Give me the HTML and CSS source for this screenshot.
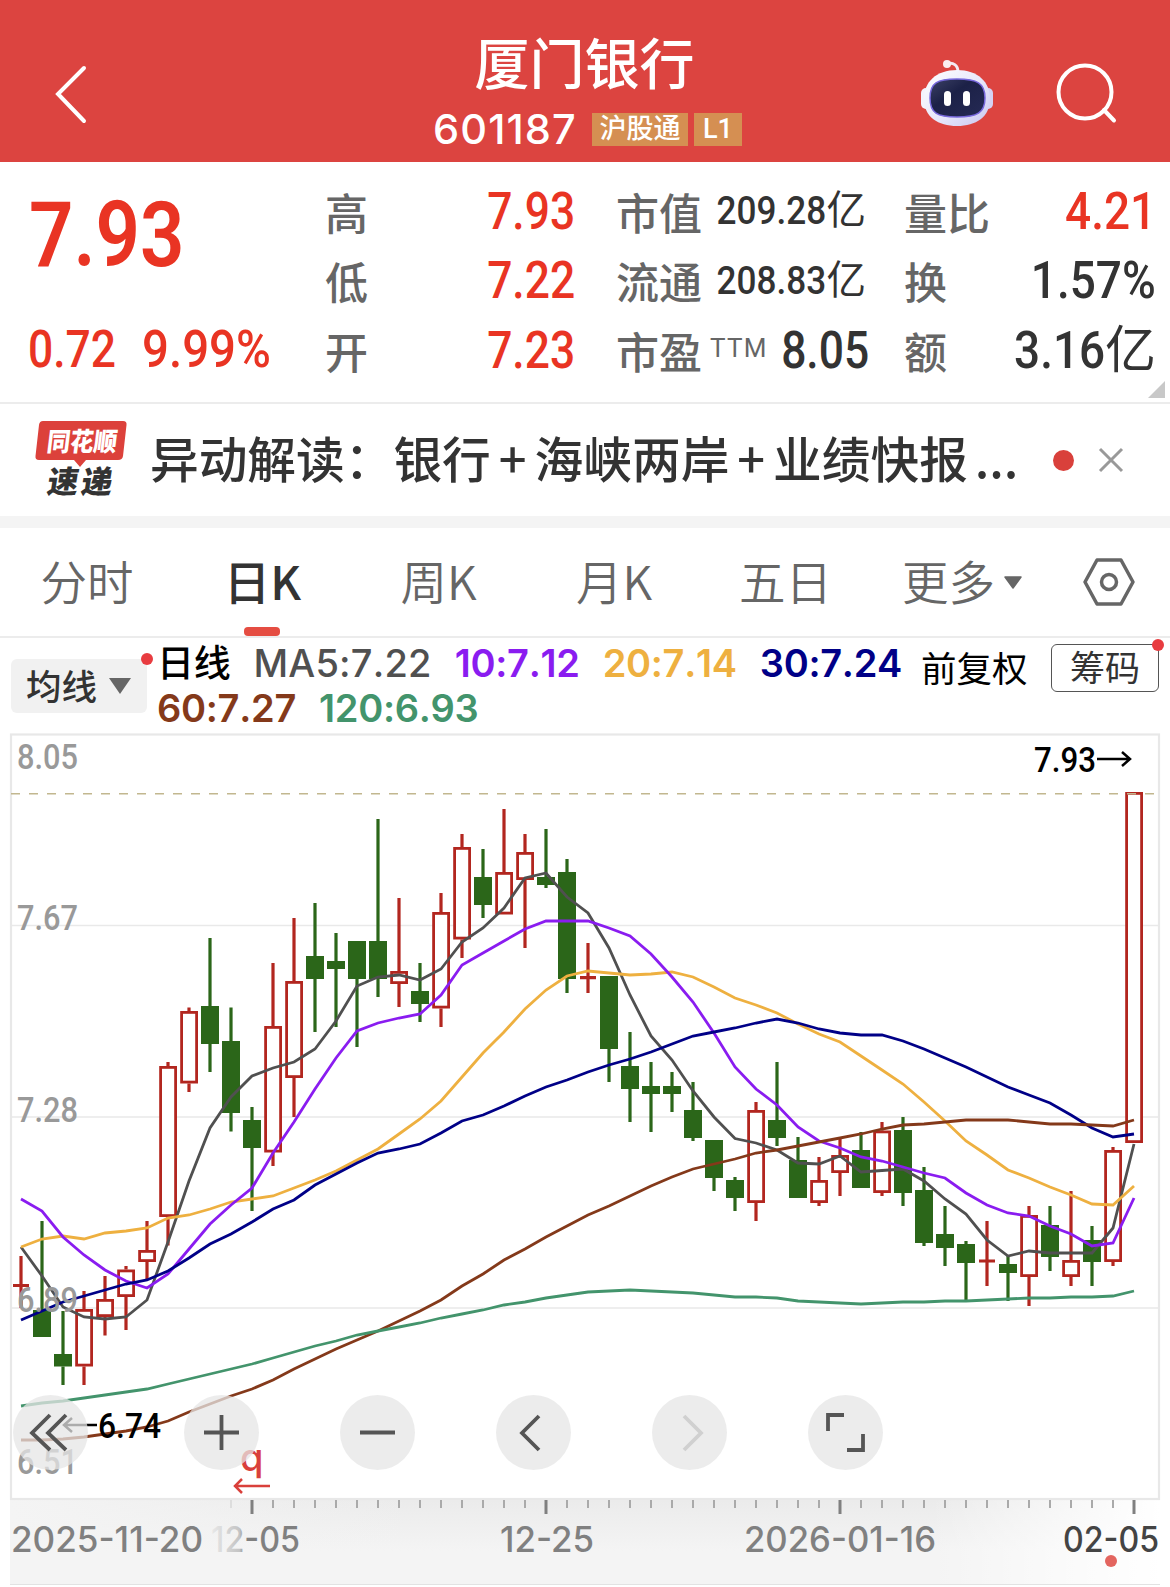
FILE: index.html
```html
<!DOCTYPE html>
<html lang="zh-CN">
<head>
    <meta charset="UTF-8">
    <meta name="viewport" content="width=device-width, initial-scale=1.0">
    <title>厦门银行 601187</title>
    <link rel="stylesheet" href="styles.css">
</head>
<body>
    <header class="header">
        <svg class="back" width="36" height="62" viewBox="0 0 36 62"><path d="M31 5 L5 31 L31 58"/></svg>
        <div class="title">
            <h1>厦门银行</h1>
            <div class="code-row">
                <span class="code">601187</span>
                <span class="tag">沪股通</span>
                <span class="tag tag-l1">L1</span>
            </div>
        </div>
        <div class="header-icons">
            <svg width="74" height="70" viewBox="920 58 74 70">
                <defs>
                    <linearGradient id="shell" x1="0" y1="0" x2="1" y2="1">
                        <stop offset="0" stop-color="#fff"/>
                        <stop offset=".6" stop-color="#e4e4fa"/>
                        <stop offset="1" stop-color="#c9c6ef"/>
                    </linearGradient>
                    <linearGradient id="visor" x1="0" y1="0" x2="1" y2="1">
                        <stop offset="0" stop-color="#3c4166"/>
                        <stop offset=".4" stop-color="#1c2147"/>
                        <stop offset="1" stop-color="#252a55"/>
                    </linearGradient>
                </defs>
                <path d="M947 64 C953 62 958 65 958 72" fill="none" stroke="#f3eaf4" stroke-width="3"/>
                <circle cx="947" cy="64" r="4" fill="#fbeef0"/>
                <rect x="921" y="88" width="11" height="21" rx="5" fill="#f4f2fc"/>
                <rect x="982" y="88" width="11" height="21" rx="5" fill="#d5d2f3"/>
                <path d="M957 70 C978 70 990 82 990 99 C990 117 976 126 957 126 C938 126 924 117 924 99 C924 82 936 70 957 70 Z" fill="url(#shell)"/>
                <path d="M957 79 C977 79 985 83 985 98 C985 113 977 117 957 117 C937 117 930 113 930 98 C930 83 937 79 957 79 Z" fill="url(#visor)" stroke="#7768dc" stroke-width="1.5"/>
                <rect x="944" y="91" width="7" height="15" rx="3.5" fill="#fff"/>
                <rect x="963" y="91" width="7" height="15" rx="3.5" fill="#fff"/>
            </svg>
            <svg class="search" width="64" height="64" viewBox="1054 62 64 64">
                <circle cx="1085" cy="93" r="26.5"/>
                <path d="M1104 111 L1114 121.5"/>
            </svg>
        </div>
    </header>

    <section class="quote">
        <div class="price-box">
            <div class="price num">7.93</div>
            <div class="change"><span class="num">0.72</span><span class="num">9.99%</span></div>
        </div>
        <dl class="stats">
            <div><dt>高</dt><dd class="red"><span class="num">7.93</span></dd></div>
            <div><dt>市值</dt><dd class="small"><span class="num">209.28</span>亿</dd></div>
            <div><dt>量比</dt><dd class="red"><span class="num">4.21</span></dd></div>
            <div><dt>低</dt><dd class="red"><span class="num">7.22</span></dd></div>
            <div><dt>流通</dt><dd class="small"><span class="num">208.83</span>亿</dd></div>
            <div><dt>换</dt><dd><span class="num">1.57%</span></dd></div>
            <div><dt>开</dt><dd class="red"><span class="num">7.23</span></dd></div>
            <div><dt>市盈<sup>TTM</sup></dt><dd class="pe"><span class="num">8.05</span></dd></div>
            <div><dt>额</dt><dd><span class="num">3.16</span>亿</dd></div>
        </dl>
        <i class="corner"></i>
    </section>

    <section class="news">
        <svg class="news-logo" width="94" height="80" viewBox="34 420 94 80">
            <path d="M43 421 H123 Q127 421 126.500 425 L123 456 Q122.500 460 118 460 H86 L80 467 L74 460 H39 Q35 460 35.500 456 L39 425 Q39.500 421 43 421 Z" fill="#dc413b"/>
            <text class="logo-top" transform="translate(46 451) skewX(-7)" textLength="70" lengthAdjust="spacingAndGlyphs">同花顺</text>
            <text class="logo-bottom" transform="translate(46 493) skewX(-9)" textLength="65">速递</text>
        </svg>
        <p>异动解读：银行<b>+</b>海峡两岸<b>+</b>业绩快报<span class="dots">...</span></p>
        <i class="dot-big"></i>
        <svg class="close" width="26" height="26" viewBox="0 0 26 26"><path d="M2 2 L24 24 M24 2 L2 24"/></svg>
    </section>

    <nav class="tabs">
        <span>分时</span>
        <span class="active">日K</span>
        <span>周K</span>
        <span>月K</span>
        <span>五日</span>
        <span>更多<svg width="18" height="13" viewBox="0 0 18 13"><path d="M1 1 H17 L9 12 Z" fill="#666" stroke="#666" stroke-width="1.500" stroke-linejoin="round"/></svg></span>
        <span><svg class="gear" width="54" height="50" viewBox="0 0 54 50"><path d="M15 3 H39 L51 25 L39 47 H15 L3 25 Z"/><circle cx="27" cy="25" r="7.500"/></svg></span>
    </nav>

    <section class="legend">
        <div class="ma-button">均线<i class="caret"></i><i class="dot"></i></div>
        <div class="ma-list">
            <span class="ma-title">日线</span>
            <span class="ma5">MA5:7.22</span>
            <span class="ma10">10:7.12</span>
            <span class="ma20">20:7.14</span>
            <span class="ma30">30:7.24</span>
            <span class="ma60">60:7.27</span>
            <span class="ma120">120:6.93</span>
        </div>
        <span class="adjust">前复权</span>
        <span class="chips">筹码<i class="dot"></i></span>
    </section>

    <section class="chart">
        <svg id="kline" width="1170" height="860" viewBox="0 727 1170 860">
            <defs>
                <linearGradient id="axisBg" x1="0" y1="0" x2="0" y2="1">
                    <stop offset="0" stop-color="#ebebeb"/>
                    <stop offset=".6" stop-color="#f4f4f4"/>
                </linearGradient>
                <linearGradient id="axisFade">
                    <stop offset="0" stop-color="#f4f4f4"/>
                    <stop offset=".35" stop-color="#f4f4f4" stop-opacity="0"/>
                    <stop offset=".8" stop-color="#fff" stop-opacity="0"/>
                    <stop offset="1" stop-color="#fff"/>
                </linearGradient>
                <linearGradient id="dateFade" gradientUnits="userSpaceOnUse" x1="213" y1="0" x2="246" y2="0">
                    <stop offset="0" stop-color="#e6e6e6"/>
                    <stop offset=".8" stop-color="#c4c4c4"/>
                    <stop offset="1" stop-color="#808080"/>
                </linearGradient>
            </defs>
            <rect x="10" y="1500" width="1150" height="85" fill="url(#axisBg)"/>
            <rect x="10" y="1500" width="1150" height="85" fill="url(#axisFade)"/>
            <path d="M10 1584.500 H1160" stroke="#e2e2e2"/>
            <path class="grid" d="M11 925.500 H1159 M11 1117 H1159 M11 1308 H1159"/>
            <rect class="frame" x="11" y="734.500" width="1148" height="764.500"/>
            <g id="ticks"></g>
            <g id="candles"></g>
            <path class="last-price" d="M11 793.700 H1159"/>
            <g id="averages"></g>
            <g class="axis-y">
                <text x="17" y="769" textLength="61" lengthAdjust="spacingAndGlyphs">8.05</text>
                <text x="17" y="930" textLength="61" lengthAdjust="spacingAndGlyphs">7.67</text>
                <text x="17" y="1122" textLength="61" lengthAdjust="spacingAndGlyphs">7.28</text>
                <text x="17" y="1312" textLength="61" lengthAdjust="spacingAndGlyphs">6.89</text>
                <text x="17" y="1474" textLength="61" lengthAdjust="spacingAndGlyphs">6.51</text>
            </g>
            <g class="peak">
                <text x="1034" y="772" textLength="62" lengthAdjust="spacingAndGlyphs">7.93</text>
                <path d="M1097 759 H1130 M1122 752 L1130 759 L1122 766"/>
                <text x="98" y="1437.500" textLength="63" lengthAdjust="spacingAndGlyphs">6.74</text>
                <path d="M97 1425 H64 M72 1418 L64 1425 L72 1432"/>
            </g>
            <g class="dividend">
                <text x="240" y="1471">q</text>
                <path d="M270 1486 H236 M242 1479 L235 1486 L242 1493"/>
            </g>
            <g class="axis-x">
                <text x="11" y="1552" textLength="192" lengthAdjust="spacingAndGlyphs">2025-11-20</text>
                <text x="211" y="1552" textLength="89" lengthAdjust="spacingAndGlyphs" fill="url(#dateFade)">12-05</text>
                <text x="500" y="1552" textLength="94" lengthAdjust="spacingAndGlyphs">12-25</text>
                <text x="744" y="1552" textLength="192" lengthAdjust="spacingAndGlyphs">2026-01-16</text>
                <text class="today" x="1063" y="1552" textLength="96" lengthAdjust="spacingAndGlyphs">02-05</text>
            </g>
            <circle cx="1111" cy="1561" r="6" fill="#e3655f"/>
        </svg>
        <div class="tools">
            <button><svg viewBox="0 0 75 75"><path d="M37 20 L19 38 L37 55 M53 20 L35 38 L53 55"/></svg></button>
            <button><svg viewBox="0 0 75 75"><path d="M20 37.500 H55 M37.500 20 V55"/></svg></button>
            <button><svg viewBox="0 0 75 75"><path d="M20 37.500 H55"/></svg></button>
            <button><svg viewBox="0 0 75 75"><path d="M43 21 L26 38 L43 55"/></svg></button>
            <button class="disabled"><svg viewBox="0 0 75 75"><path d="M32 21 L49 38 L32 55"/></svg></button>
            <button><svg viewBox="0 0 75 75"><path d="M36 20 H20 V36 M39 55 H55 V39"/></svg></button>
        </div>
    </section>

    <script src="chart.js"></script>
</body>
</html>
```

FILE: styles.css
```css
* {
    box-sizing: border-box;
}

body {
    margin: 0;
    width: 1170px;
    height: 1587px;
    overflow: hidden;
    background: #fff;
    color: #333;
    font-family: Inter, "Noto Sans CJK SC", sans-serif;
}

i {
    display: block;
}

/* condensed digits */
.num {
    display: inline-block;
    font-family: Roboto, sans-serif;
    font-weight: 500;
    transform: scaleX(0.87);
    transform-origin: right center;
}

.header {
    display: grid;
    grid-template-columns: 1fr 400px 1fr;
    align-items: center;
    height: 162px;
    background: #dc4440;
    color: #fff;
}

.back {
    margin: 26px 0 0 53px;
    fill: none;
    stroke: #fff;
    stroke-width: 4;
    stroke-linecap: round;
}

.title {
    text-align: center;
}

.title h1 {
    margin: 16px 0 0 -1px;
    font-family: "Noto Sans CJK SC", sans-serif;
    font-size: 55px;
    font-weight: 500;
    line-height: 76px;
}

.code-row {
    display: flex;
    justify-content: center;
    align-items: center;
    height: 56px;
    margin: 2px 0 0 5px;
    padding-top: 2px;
}

.code {
    margin-right: 15px;
    font-size: 41.5px;
    font-weight: 550;
    letter-spacing: 1.1px;
}

.tag {
    width: 96px;
    height: 33px;
    margin-right: 6px;
    background: #d58f52;
    font-size: 27px;
    font-weight: 500;
    line-height: 32px;
}

.tag-l1 {
    width: 48px;
    margin-right: 0;
    font-family: Roboto, sans-serif;
}

.header-icons {
    display: flex;
    align-items: center;
    justify-content: flex-end;
    gap: 60px;
    margin: 24px 52px 0 0;
}

.search {
    fill: none;
    stroke: #fff;
    stroke-width: 4;
    stroke-linecap: round;
}

.quote {
    display: flex;
    position: relative;
    height: 242px;
    border-bottom: 2px solid #ececec;
}

.price-box {
    width: 325px;
    padding-left: 29px;
    color: #e93423;
}

.price-box .num {
    transform-origin: left center;
}

.price {
    margin-top: 28px;
    font-size: 91px;
    line-height: 90px;
    white-space: nowrap;
}

.price.num {
    font-weight: 600;
    transform: scaleX(0.855);
}

.change {
    display: flex;
    gap: 13px;
    margin: 40px 0 0 -1px;
    font-size: 51px;
    line-height: 60px;
}

.change .num:last-child {
    transform: scaleX(0.93);
}

.stats {
    display: grid;
    grid-template-columns: 250px 250px 249px;
    grid-auto-rows: 69.5px;
    column-gap: 41px;
    margin: 14px 0 0;
}

.stats > div {
    display: flex;
    justify-content: space-between;
    align-items: center;
    white-space: nowrap;
}

.stats > div:nth-child(3n) {
    margin-left: -3px;
}

.stats > div:nth-child(3n) .num {
    transform: scaleX(0.9);
}

dt {
    color: #666;
    font-size: 43px;
    font-weight: 500;
}

dt sup {
    margin-left: 8px;
    font-family: Roboto, sans-serif;
    font-size: 26px;
    font-weight: 400;
    letter-spacing: 1.3px;
    line-height: 0;
    vertical-align: 12px;
}

dd {
    margin: 0;
    font-size: 51px;
    line-height: 69px;
}

dd.small {
    font-size: 39.5px;
}

dd.small .num {
    transform: scaleX(0.89);
}

dd.pe {
    margin-right: 3px;
}

.red {
    color: #e93423;
}

.corner {
    position: absolute;
    right: 5px;
    bottom: 4px;
    border: solid transparent;
    border-width: 0 0 17px 17px;
    border-bottom-color: #c8c8c8;
}

.news {
    display: flex;
    align-items: center;
    height: 124px;
    padding: 0 46px 0 34px;
    border-bottom: 12px solid #f4f4f4;
}

.news-logo {
    overflow: visible;
}

.logo-top,
.logo-bottom {
    font-family: "Noto Sans CJK SC", sans-serif;
    font-size: 26px;
    font-weight: 900;
    fill: #fff;
}

.logo-bottom {
    font-size: 31px;
    fill: #333;
}

.news p {
    flex: 1;
    margin: -6px 0 0 22px;
    font-family: "Noto Sans CJK SC", sans-serif;
    font-size: 48.7px;
    font-weight: 500;
    line-height: 70px;
    white-space: nowrap;
}

.news b {
    margin: 0 8px;
    font-weight: 500;
}

.dots {
    margin-left: 7px;
}

.dot-big {
    width: 21px;
    height: 21px;
    margin-right: 24px;
    border-radius: 50%;
    background: #d9403b;
}

.close {
    stroke: #999;
    stroke-width: 3;
}

.tabs {
    display: grid;
    grid-template-columns: 174px 177px 175px 176px 167px 186px 108px;
    height: 110px;
    border-bottom: 2px solid #ececec;
    color: #666;
    font-family: "Noto Sans CJK SC", sans-serif;
    font-size: 46.5px;
    font-weight: 350;
}

.tabs span {
    display: flex;
    position: relative;
    align-items: center;
    justify-content: center;
    padding-bottom: 6px;
}

.tabs span:last-child {
    padding-bottom: 0;
}

.tabs .active {
    color: #333;
    font-weight: 500;
}

.tabs .active::after {
    content: "";
    position: absolute;
    bottom: 0;
    left: 70px;
    width: 36px;
    height: 9px;
    border-radius: 4px;
    background: #e54d42;
}

.tabs svg {
    margin: 6px 0 0 9px;
}

.tabs .gear {
    margin: 0;
    fill: none;
    stroke: #666;
    stroke-width: 3.5;
    stroke-linejoin: round;
}

.legend {
    display: flex;
    align-items: flex-start;
    height: 89px;
    padding-left: 11px;
}

.ma-button {
    display: flex;
    position: relative;
    align-items: center;
    width: 136px;
    height: 54px;
    margin-top: 21px;
    padding: 0 0 4px 15px;
    border-radius: 6px;
    background: #f1f1f1;
    font-size: 35.5px;
    font-weight: 500;
}

.caret {
    margin: 3px 0 0 12px;
    border: solid transparent;
    border-width: 16px 11px 0;
    border-top-color: #666;
}

.dot {
    position: absolute;
    top: -6px;
    right: -6px;
    width: 12px;
    height: 12px;
    border-radius: 50%;
    background: #e83c40;
}

.ma-list {
    display: flex;
    flex-wrap: wrap;
    column-gap: 23px;
    width: 774px;
    margin-top: 3px;
    padding-left: 10px;
    font-size: 38px;
    font-weight: 600;
    line-height: 45px;
    font-kerning: none;
    letter-spacing: -0.3px;
    white-space: nowrap;
}

.ma-title {
    color: #000;
    font-size: 37px;
    font-weight: 500;
}

.ma5 {
    color: #505050;
    font-weight: 500;
    letter-spacing: 0.2px;
}

.ma10 { color: #8a1cf0; }
.ma20 { color: #eeb040; }
.ma30 { color: #000087; }
.ma60 { color: #84391a; }
.ma120 { color: #43946c; }

.adjust {
    width: 108px;
    margin-top: 6px;
    color: #000;
    font-size: 35.5px;
    line-height: 51px;
    white-space: nowrap;
}

.chips {
    position: relative;
    width: 108px;
    height: 48px;
    margin: 6px 0 0 22px;
    border: 1.5px solid #555;
    border-radius: 6px;
    font-size: 35px;
    line-height: 46px;
    text-align: center;
}

.chart {
    position: relative;
    height: 860px;
}

.chart > svg {
    display: block;
}

.grid {
    stroke: #e9e9e9;
    stroke-width: 1.5;
}

.frame {
    fill: none;
    stroke: #e8e8e8;
    stroke-width: 2.2;
}

.last-price {
    stroke: #c2b78f;
    stroke-width: 1.6;
    stroke-dasharray: 9 9;
}

.axis-y,
.peak {
    font-family: Roboto, sans-serif;
    font-size: 35px;
    font-weight: 500;
    fill: #999;
}

.peak {
    fill: #000;
}

.peak path,
.dividend path {
    fill: none;
    stroke: #000;
    stroke-width: 2.5;
}

.dividend {
    font-family: Inter, sans-serif;
    font-size: 38px;
    font-weight: 500;
    fill: #d9403b;
}

.dividend path {
    stroke: #d9403b;
}

.axis-x {
    font-family: Inter, sans-serif;
    font-size: 35px;
    font-weight: 500;
    fill: #808080;
}

.axis-x .today {
    fill: #444;
}

/* round buttons floating over the plot */
.tools {
    display: flex;
    position: absolute;
    top: 668px;
    left: 13px;
    gap: 81px;
}

.tools button {
    width: 75px;
    height: 75px;
    padding: 0;
    border: 0;
    border-radius: 50%;
    background: rgba(230, 230, 230, 0.75);
}

.tools button:first-child {
    margin-right: 15px;
}

.tools svg {
    display: block;
    fill: none;
    stroke: #555;
    stroke-width: 3.8;
}

.tools .disabled svg {
    stroke: #d0d0d0;
}
```

FILE: chart.js
```js
const STEP = 21;
const xOf = i => STEP + i * STEP;

// [direction, high, body top, body bottom, low] in plot coordinates
const candles = [
    ['r', 1256, 1285.5, 1285.5, 1308], ['g', 1221, 1310, 1337, 1337], ['g', 1311, 1354, 1366.5, 1385],
    ['r', 1291, 1309, 1366.5, 1385], ['r', 1276, 1299, 1317, 1335.5], ['r', 1266, 1269.5, 1297, 1330],
    ['r', 1221, 1250, 1262, 1279], ['r', 1062, 1066, 1217, 1245.5], ['r', 1007.5, 1011, 1083.5, 1092],
    ['g', 938, 1006, 1044, 1072], ['g', 1007.5, 1041, 1113, 1131.5], ['g', 1107, 1120, 1148, 1211],
    ['r', 963, 1026, 1152.5, 1166], ['r', 918, 981, 1078, 1117], ['g', 903, 956, 979, 1032],
    ['g', 933, 961, 969, 1027], ['g', 941, 941, 979, 1047], ['g', 819, 941, 979, 997],
    ['r', 898, 971, 984, 1007], ['g', 963, 991, 1004, 1022], ['r', 893, 912, 1008.5, 1027],
    ['r', 834, 847, 939.5, 958], ['g', 849, 877, 905, 918], ['r', 809, 872, 914.5, 914],
    ['r', 834, 852, 880, 948], ['g', 829, 877, 885, 888], ['g', 859, 872, 979, 993],
    ['r', 943, 977.7, 977.7, 993], ['g', 976, 976, 1049, 1082], ['g', 1032, 1066, 1089, 1122],
    ['g', 1062, 1086, 1094, 1132], ['g', 1072, 1086, 1094, 1112], ['g', 1082, 1110, 1138, 1141],
    ['g', 1140, 1140, 1178, 1191], ['g', 1177, 1180, 1198, 1211], ['r', 1102, 1110, 1203, 1221],
    ['g', 1062, 1120, 1138, 1146], ['g', 1137, 1160, 1198, 1198], ['r', 1157, 1180, 1203, 1206],
    ['r', 1137, 1155, 1173, 1196], ['g', 1132, 1150, 1188, 1188], ['r', 1122, 1130.5, 1193, 1196],
    ['g', 1117, 1130, 1193, 1206], ['g', 1167, 1190, 1243, 1246], ['g', 1206, 1234, 1248, 1266],
    ['g', 1241, 1244, 1263, 1300], ['r', 1221, 1261, 1261, 1286], ['g', 1256, 1264, 1273, 1301],
    ['r', 1206, 1215, 1277, 1306], ['g', 1206, 1225, 1257, 1271], ['r', 1191, 1260, 1277, 1286],
    ['g', 1226, 1240, 1262, 1286], ['r', 1147, 1150, 1262, 1266], ['r', 792, 792, 1143, 1143]
];

// moving averages, one value per candle
const averages = {
    '#505050': [1247, 1276, 1307, 1317, 1319, 1317, 1300, 1242, 1181, 1128, 1097, 1076, 1068, 1062, 1049, 1021, 986, 977, 975, 980, 969, 942, 928, 908, 878, 873, 897, 913, 948, 995, 1036, 1060, 1091, 1117, 1138.5, 1143, 1150, 1163, 1164, 1156, 1172, 1170.5, 1169, 1181, 1199, 1214, 1240, 1256, 1251, 1253, 1253, 1253, 1228, 1144],
    '#eeb040': [1247, 1239, 1236, 1239, 1233, 1231, 1228, 1218, 1215, 1209, 1202, 1199, 1196, 1188, 1180, 1171, 1160, 1149, 1134, 1119, 1101, 1077, 1053, 1032, 1009, 990, 976, 971, 973, 975, 974, 972, 977, 987, 998, 1005, 1013, 1024, 1034, 1042, 1056, 1070, 1084, 1102, 1121, 1141, 1155, 1170, 1178, 1187, 1195, 1204, 1205, 1186],
    '#8a1cf0': [1199, 1211, 1237, 1255, 1270, 1281, 1288, 1274, 1249, 1224, 1205, 1188, 1153, 1122, 1089, 1058, 1031, 1023, 1018, 1014, 995, 965, 953, 941, 929, 921, 921, 921, 928, 936, 954, 977, 1002, 1033, 1067, 1089, 1105, 1127, 1141, 1148, 1157, 1161, 1167, 1173, 1178, 1193, 1205, 1213, 1216, 1226, 1234, 1246, 1243, 1198],
    '#000087': [1320, 1311, 1302, 1296, 1290, 1284, 1280, 1271, 1258, 1244, 1234, 1222, 1209, 1200, 1185, 1174, 1163, 1153, 1149, 1144, 1133, 1121, 1115, 1106, 1096, 1087, 1080, 1072, 1065, 1059, 1052, 1044, 1036, 1032, 1028, 1023, 1019, 1023, 1029, 1033, 1035, 1035, 1041, 1049, 1058, 1067, 1077, 1087, 1095, 1103, 1115, 1128, 1137, 1134],
    '#84391a': [1440, 1440, 1439, 1437, 1434, 1431, 1427, 1421, 1412, 1404, 1396, 1389, 1380, 1369, 1359, 1349, 1340, 1331, 1321, 1311, 1300, 1286, 1274, 1260, 1249, 1237, 1226, 1215, 1206, 1196, 1186, 1177, 1169, 1164, 1159, 1153, 1150, 1146, 1142, 1138, 1134, 1129, 1125, 1124, 1122, 1120, 1120, 1120, 1122, 1124, 1124, 1125, 1126, 1120],
    '#43946c': [1406, 1403, 1401, 1398, 1395, 1392, 1389, 1384, 1379, 1374, 1369, 1364, 1358, 1352, 1346, 1341, 1335, 1331, 1327, 1323, 1318, 1314, 1310, 1305, 1302, 1298, 1295, 1292, 1291, 1290, 1291, 1292, 1293, 1295, 1297, 1297, 1298, 1301, 1302, 1303, 1304, 1303, 1302, 1302, 1301, 1301, 1300, 1299, 1298, 1298, 1297, 1297, 1296, 1291]
};

let out = '';
candles.forEach(([dir, high, top, bottom, low], i) => {
    const x = xOf(i);
    const color = dir === 'g' ? '#2b6619' : '#b2261f';
    if (top === bottom) {
        out += `<path d="M${x} ${high}V${low}M${x - 8} ${top}H${x + 8}" stroke="${color}" stroke-width="3.2"/>`;
        return;
    }
    out += `<path d="M${x} ${high}V${top}M${x} ${bottom}V${Math.max(low, bottom)}" stroke="${color}" stroke-width="3.2"/>`;
    if (dir === 'g') {
        out += `<rect x="${x - 9}" y="${top}" width="18" height="${bottom - top}" fill="${color}"/>`;
    } else {
        out += `<rect x="${x - 7.4}" y="${top + 1.4}" width="15" height="${bottom - top - 2.8}" fill="#fff" stroke="${color}" stroke-width="2.8"/>`;
    }
});
document.getElementById('candles').innerHTML = out;

document.getElementById('averages').innerHTML = Object.entries(averages).map(([color, ys]) =>
    `<polyline points="${ys.map((y, i) => xOf(i) + ',' + y).join(' ')}" fill="none" stroke="${color}" stroke-width="2.8"/>`
).join('');

let ticks = '';
for (let i = 10; i < 54; i++) {
    const major = (i - 11) % 14 === 0;
    ticks += `<path d="M${xOf(i)} 1500V${major ? 1514 : 1508}" stroke="${major ? '#808080' : i === 10 ? '#ddd' : '#aaa'}" stroke-width="${major ? 3 : 2}"/>`;
}
document.getElementById('ticks').innerHTML = ticks;
```
